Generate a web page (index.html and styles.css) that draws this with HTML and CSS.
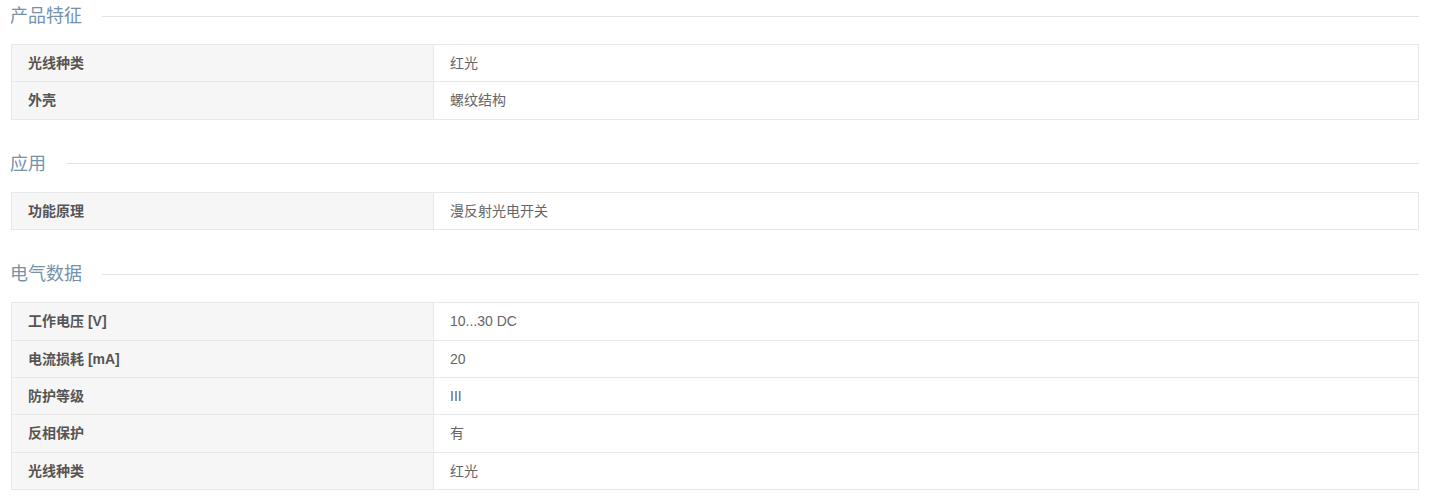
FILE: index.html
```html
<!DOCTYPE html>
<html lang="zh-CN">
<head>
    <meta charset="UTF-8">
    <title>产品参数</title>
    <link rel="stylesheet" href="styles.css">
</head>
<body>
    <div class="specs">
        <div class="spec-section">
            <h2 class="spec-title"><span>产品特征</span></h2>
            <table class="spec-table">
                <tr><th>光线种类</th><td>红光</td></tr>
                <tr><th>外壳</th><td>螺纹结构</td></tr>
            </table>
        </div>
        <div class="spec-section">
            <h2 class="spec-title"><span>应用</span></h2>
            <table class="spec-table">
                <tr><th>功能原理</th><td>漫反射光电开关</td></tr>
            </table>
        </div>
        <div class="spec-section">
            <h2 class="spec-title"><span>电气数据</span></h2>
            <table class="spec-table">
                <tr><th>工作电压 [V]</th><td>10...30 DC</td></tr>
                <tr><th>电流损耗 [mA]</th><td>20</td></tr>
                <tr><th>防护等级</th><td>III</td></tr>
                <tr><th>反相保护</th><td>有</td></tr>
                <tr><th>光线种类</th><td>红光</td></tr>
            </table>
        </div>
    </div>
</body>
</html>
```

FILE: styles.css
```css
body {
    margin: 0;
    background: #fff;
    font-family: "Liberation Sans", "Noto Sans CJK SC", Arial, sans-serif;
    font-size: 14px;
    color: #555;
}
.specs {
    padding: 4px 13px 0 10px;
}
.spec-section {
    margin-bottom: 32px;
}
.spec-title {
    display: flex;
    align-items: center;
    gap: 20px;
    margin: 0 0 16px 0;
    font-size: 18px;
    font-weight: normal;
    line-height: 24px;
    color: #7492ac;
}
.spec-title::after {
    content: "";
    flex: 1;
    height: 1px;
    background: #e3e3e3;
}
.spec-table {
    width: calc(100% - 1px);
    margin-left: 1px;
    border-collapse: collapse;
    border: 1px solid #e8e8e8;
}
.spec-table th,
.spec-table td {
    border: 1px solid #e8e8e8;
    padding: 8px 16px;
    line-height: 20.4px;
    text-align: left;
}
.spec-table th {
    width: 389px;
    background: #f6f6f6;
    font-weight: bold;
    color: #555;
}
.spec-table td {
    color: #666;
    background: #fff;
}
```
